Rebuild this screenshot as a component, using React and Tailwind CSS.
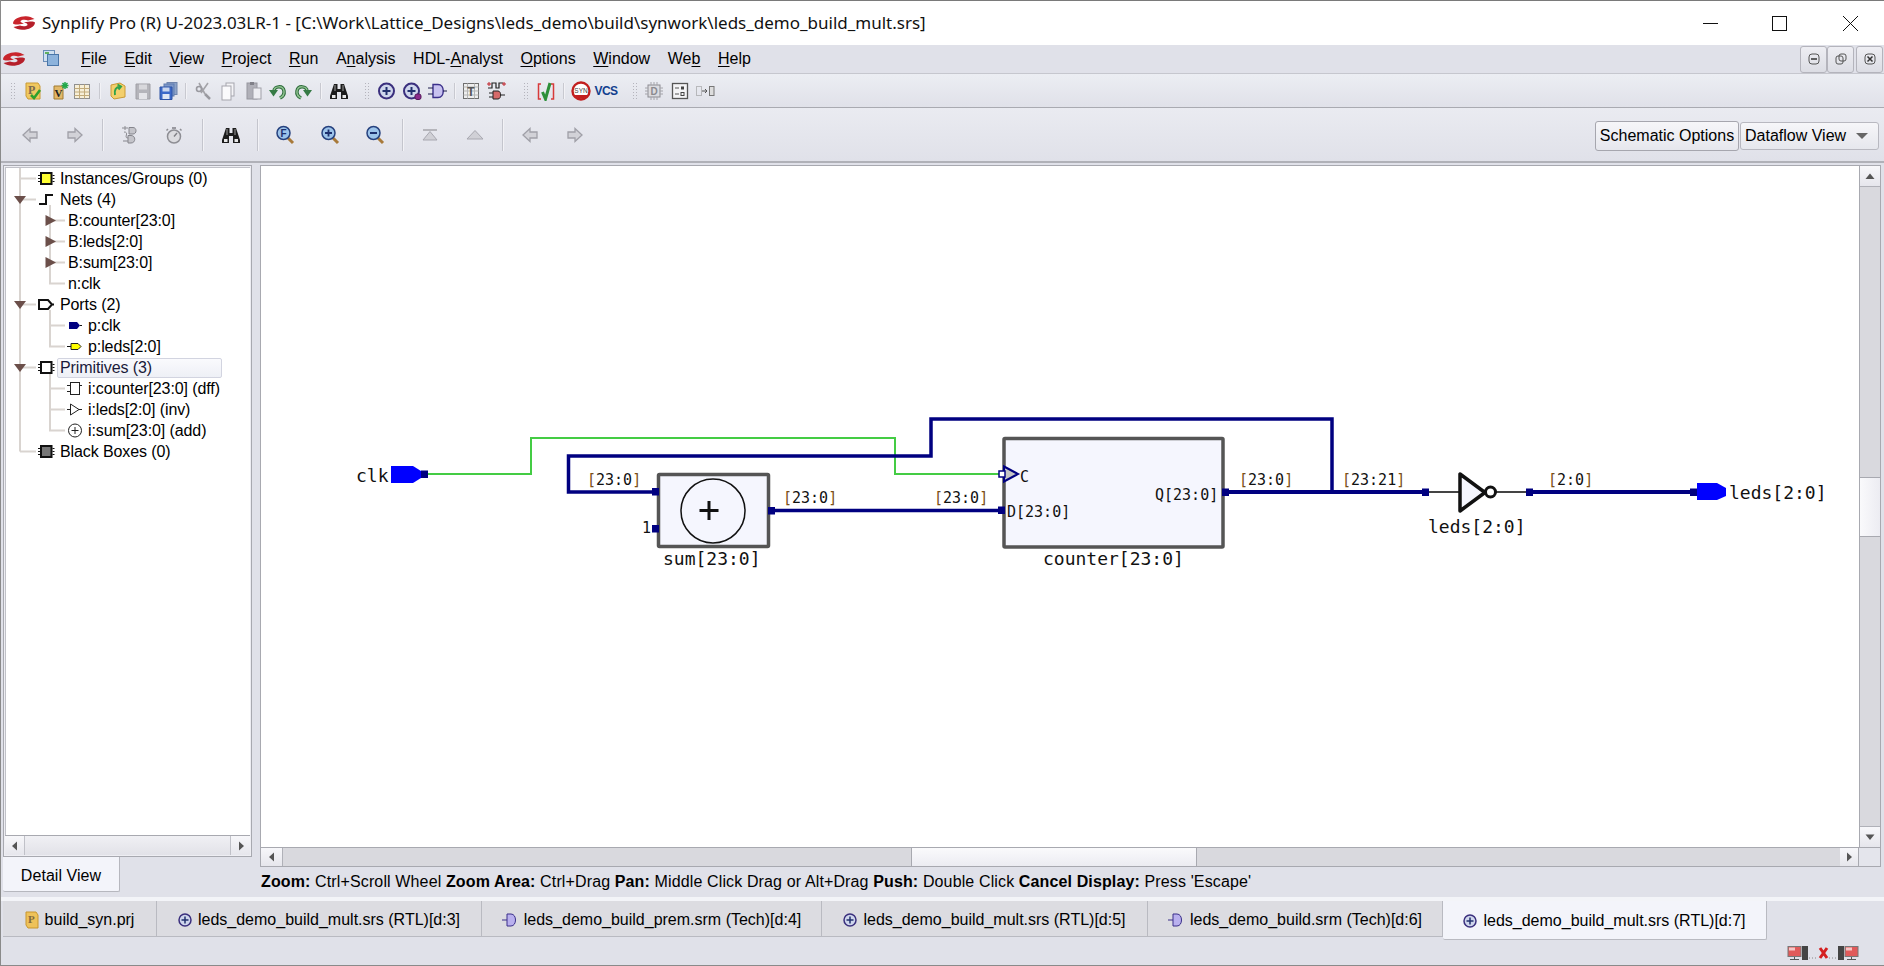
import React from "react";

const Svg = ({ children, className = "w-5 h-5", vb = "0 0 20 20" }) => (
  <svg viewBox={vb} className={className + " shrink-0"}>{children}</svg>
);

const Logo = ({ className }) => (
  <svg viewBox="0 0 24 16" className={className + " shrink-0"}>
    <path d="M1 8.500C1 4 8 1 14 1.200C17 1.300 20 2.300 22.500 4L16 5.500C13 4.200 8.500 4.800 8.500 6.300C8.500 7.400 10 8 12 8.500C6 9.600 3 10 1 8.500Z" fill="#c9252c" />
    <path d="M23 7.500C23 12 16 15 10 14.800C7 14.700 4 13.700 1.500 12L8 10.500C11 11.800 15.500 11.200 15.500 9.700C15.500 8.600 14 8 12 7.500C18 6.400 21 6 23 7.500Z" fill="#b51f2a" />
  </svg>
);

const Grip = () => (
  <svg viewBox="0 0 4 18" className="w-[4px] h-[18px] shrink-0">
    {[1, 4, 7, 10, 13, 16].map((y) => (
      <g key={y}><rect x="0" y={y} width="1" height="1" fill="#b4b4bc" /><rect x="3" y={y} width="1" height="1" fill="#b4b4bc" /></g>
    ))}
  </svg>
);
const Sep = ({ tall }) => (
  <div className={tall ? "w-[2px] h-[32px] bg-[#c4c5cd] border-r border-[#f2f2f6] shrink-0" : "w-[2px] h-[16px] bg-[#c8c9d0] border-r border-[#f2f2f6] shrink-0"} />
);

const IProj = () => (
  <Svg>
    <path d="M3 2H15L17 5V18H5L3 15Z" fill="#f0c860" stroke="#c99a35" />
    <text x="5" y="13" fontSize="12" fontWeight="700" fontFamily="Liberation Serif" fill="#7a6a50">P</text>
    <path d="M8 14L11 17L17 9" fill="none" stroke="#2ea02e" strokeWidth="2.500" />
  </Svg>
);
const IVer = () => (
  <Svg>
    <path d="M4 5H13V18H4Z" fill="#e2b868" stroke="#a07a30" />
    <text x="4.500" y="16" fontSize="11" fontWeight="700" fontFamily="Liberation Serif" fill="#222">V</text>
    <path d="M15 1V8M11.500 4.500H18.500M12.500 2L17.500 7M17.500 2L12.500 7" stroke="#22a84a" strokeWidth="1.500" />
  </Svg>
);
const ITable = () => (
  <Svg>
    <rect x="2.500" y="3.500" width="15" height="14" fill="#f7efd8" stroke="#8f8f8f" />
    <path d="M2.500 7.500H17.500M2.500 11H17.500M2.500 14.500H17.500M7.500 3.500V17.500M12.500 3.500V17.500" stroke="#c2ab7a" />
  </Svg>
);
const IFolder = () => (
  <Svg>
    <path d="M3 4L12 2L17 5V16L6 18L3 15Z" fill="#f3cf6c" stroke="#c99a35" />
    <path d="M7 14C6 9 8 6 12 5.500M9.500 3.500L13 5.500L10.500 8.500" fill="none" stroke="#2fa34a" strokeWidth="2" />
  </Svg>
);
const ISave = () => (
  <Svg>
    <path d="M3 3H17V18H3Z" fill="#b4b4ba" stroke="#a0a0a6" />
    <rect x="6" y="3.500" width="8" height="5" fill="#d8d8dc" />
    <rect x="6" y="12" width="8" height="6" fill="#e4e4e8" />
  </Svg>
);
const ISaveAll = () => (
  <Svg>
    <rect x="9" y="1.500" width="10" height="12" fill="#8da3c8" stroke="#6f84ac" />
    <rect x="6" y="3" width="10" height="12" fill="#7d97c8" stroke="#5f7cb0" />
    <path d="M2 6H14V18.500H2Z" fill="#3b68c8" stroke="#2c52a4" />
    <rect x="4.500" y="6.500" width="7" height="4" fill="#c9d6ee" />
    <rect x="4.500" y="13" width="7" height="5" fill="#dfe6f4" />
  </Svg>
);
const IScissors = () => (
  <Svg>
    <path d="M6 2L12 13M15 2L8 12" stroke="#a3a3a8" strokeWidth="1.600" />
    <circle cx="6" cy="8" r="2.500" fill="none" stroke="#9a9aa0" strokeWidth="1.600" />
    <path d="M12 13L17 18" stroke="#9a9aa0" strokeWidth="2.500" />
  </Svg>
);
const ICopy = () => (
  <Svg>
    <rect x="8" y="2" width="8" height="13" fill="#f4f4f7" stroke="#a5a5ad" />
    <rect x="4" y="5" width="9" height="14" fill="#fafafc" stroke="#a5a5ad" />
  </Svg>
);
const IPaste = () => (
  <Svg>
    <rect x="3" y="2" width="10" height="16" fill="#b0b0b8" stroke="#96969e" />
    <rect x="9" y="7" width="8" height="11" fill="#eeeef2" stroke="#a0a0a8" />
    <rect x="6" y="1" width="4" height="3" fill="#808088" />
  </Svg>
);
const IUndo = ({ flip }) => (
  <Svg>
    <g transform={flip ? "translate(20,0) scale(-1,1)" : undefined}>
      <path d="M6 10C6 5 15 4 16 10C16.500 13 15 15.500 12 17" fill="none" stroke="#2c6a3a" strokeWidth="3.500" />
      <path d="M6 10C6 5 15 4 16 10C16.500 13 15 15.500 12 17" fill="none" stroke="#8dc08e" strokeWidth="1.500" />
      <path d="M1 9H10L5.500 15.500Z" fill="#357a45" />
    </g>
  </Svg>
);
const IBino = () => (
  <Svg>
    <path d="M5 3H8.500V8H11.500V3H15L19 15V18H12V11H8V18H1V15Z" fill="#1c1c1c" />
    <rect x="3" y="14" width="3.500" height="3" fill="#e8e8e8" />
    <rect x="13.500" y="14" width="3.500" height="3" fill="#e8e8e8" />
    <path d="M6 4V10M14 4V10" stroke="#9a9a9a" />
  </Svg>
);
const IPlus = ({ dot }) => (
  <Svg>
    <circle cx="9.500" cy="10" r="7.500" fill="#cfd6ec" stroke="#3a2f7d" strokeWidth="2" />
    <path d="M9.500 6V14M5.500 10H13.500" stroke="#22306e" strokeWidth="2" />
    {dot && <rect x="13" y="13" width="6" height="5.500" rx="2" fill="#8a2a8a" stroke="#55185a" />}
  </Svg>
);
const IAnd = () => (
  <Svg>
    <path d="M6 3.500H11C18 3.500 18 16.500 11 16.500H6Z" fill="#c8c2f0" stroke="#3a2f8a" strokeWidth="1.400" />
    <path d="M1 7H6M1 13H6M16 10H20" stroke="#1c1c4c" />
  </Svg>
);
const ITGrid = () => (
  <Svg>
    <rect x="2.500" y="2.500" width="15" height="15" fill="#eeeeee" stroke="#6f6f6f" />
    <path d="M2.500 6H17.500M2.500 10H17.500M2.500 14H17.500M6.500 2.500V17.500M13.500 2.500V17.500" stroke="#b5b5b5" />
    <text x="10" y="15" textAnchor="middle" fontSize="12" fontWeight="700" fontFamily="Liberation Sans" fill="#555">T</text>
  </Svg>
);
const ISch = () => (
  <Svg>
    <path d="M1 7H5V2H9V7H12V2H16" fill="none" stroke="#222" strokeWidth="1.200" />
    <path d="M0 3H4M2 1V5M15 3H19M17 1V5" stroke="#c0222a" />
    <path d="M6 10H11C14.500 10 14.500 18 11 18H6Z" fill="#d66a6a" stroke="#222" />
    <path d="M2 12H6M2 16H6M14 14H18" stroke="#222" />
  </Svg>
);
const ICheck = () => (
  <Svg>
    <path d="M5 3H2.500V18H5M15 3H17.500V18H15" fill="none" stroke="#d73a3a" strokeWidth="1.500" />
    <path d="M6.500 11L9.500 18L14 2" fill="none" stroke="#2c8f38" strokeWidth="3" />
  </Svg>
);
const ISyn = () => (
  <Svg>
    <circle cx="10" cy="10" r="8.500" fill="#fff" stroke="#c21f1f" strokeWidth="2.400" />
    <path d="M3 14A8.500 8.500 0 0 0 17 14Z" fill="#c21f1f" />
    <text x="10" y="12" textAnchor="middle" fontSize="6.500" fontFamily="Liberation Sans" fill="#444">SYN</text>
  </Svg>
);
const IChip = () => (
  <Svg>
    <rect x="4" y="4" width="12" height="12" fill="#dcdce0" stroke="#8c8c92" />
    <path d="M7 1V4M10 1V4M13 1V4M7 16V19M10 16V19M13 16V19M1 7H4M1 10H4M1 13H4M16 7H19M16 10H19M16 13H19" stroke="#a4a4aa" />
    <text x="10" y="13.500" textAnchor="middle" fontSize="10" fontWeight="700" fontFamily="Liberation Sans" fill="#8a8a8f">D</text>
  </Svg>
);
const IBox = () => (
  <Svg>
    <rect x="2.500" y="2.500" width="15" height="15" fill="#f4f4f6" stroke="#555" strokeWidth="1.300" />
    <path d="M5 7H9M5 13H9" stroke="#555" />
    <rect x="11" y="5.500" width="3" height="3" fill="#444" />
    <rect x="11" y="11.500" width="3" height="3" fill="none" stroke="#444" />
  </Svg>
);
const IDash = () => (
  <Svg>
    <rect x="1.500" y="5.500" width="5" height="9" fill="none" stroke="#888" strokeDasharray="1 1" />
    <path d="M7 10H12M10 8L12 10L10 12" fill="none" stroke="#555" />
    <rect x="14.500" y="5.500" width="4.500" height="9" fill="#ddd" stroke="#777" />
  </Svg>
);
const IArrow = ({ right }) => (
  <Svg>
    <g transform={right ? "translate(20,0) scale(-1,1)" : undefined}>
      <path d="M3 10L10 3.500V7H17V13H10V16.500Z" fill="#d2d2d8" stroke="#a0a0a8" strokeWidth="1.300" />
    </g>
  </Svg>
);
const IPlug = () => (
  <Svg>
    <path d="M2 3H8M5 1V5" stroke="#8c8c92" />
    <path d="M9 2.500H13C17 2.500 17 9 13 9H9Z" fill="#c4c4ca" stroke="#85858c" />
    <path d="M4 7C10 7 3 13 8 13" fill="none" stroke="#8c8c92" />
    <path d="M8 10.500H11C16 10.500 16 18 11 18H8Z" fill="#c4c4ca" stroke="#85858c" />
    <path d="M3 16H8" stroke="#85858c" />
  </Svg>
);
const IWatch = () => (
  <Svg>
    <circle cx="10" cy="11.500" r="6.500" fill="#dcdce0" stroke="#8e8e94" strokeWidth="1.500" />
    <path d="M10 11.500L13 8M8 3H12" stroke="#808086" strokeWidth="1.400" />
    <path d="M4 4L2.500 5.500M16 4L17.500 5.500" stroke="#8e8e94" strokeWidth="1.500" />
  </Svg>
);
const IMag = ({ kind }) => (
  <Svg>
    <path d="M12 12L18 18" stroke="#a87a3a" strokeWidth="3" />
    <circle cx="8.500" cy="8" r="6.500" fill="#9cc3ea" stroke="#26417e" strokeWidth="1.500" />
    {kind === "F" && <text x="8.500" y="11.500" textAnchor="middle" fontSize="10" fontWeight="700" fontFamily="Liberation Sans" fill="#1c2f6e">F</text>}
    {kind === "+" && <path d="M8.500 4.500V11.500M5 8H12" stroke="#1c2f6e" strokeWidth="1.800" />}
    {kind === "-" && <path d="M5 8H12" stroke="#1c2f6e" strokeWidth="2" />}
  </Svg>
);
const ITop = () => (
  <Svg>
    <rect x="3" y="4" width="14" height="2" fill="#b5b5bb" />
    <path d="M10 6.500L17 15H3Z" fill="#d0d0d6" stroke="#a8a8b0" />
  </Svg>
);
const IUp = () => (
  <Svg>
    <path d="M10 5.500L18 14H2Z" fill="#d0d0d6" stroke="#a8a8b0" />
  </Svg>
);

const toolbar1 = [
  ["ml-[10px]", <Grip />], ["ml-[8px]", <IProj />], ["ml-[7px]", <IVer />], ["ml-[2px]", <ITable />], ["ml-[7px]", <Sep />],
  ["ml-[7px]", <IFolder />], ["ml-[5px]", <ISave />], ["ml-[5px]", <ISaveAll />], ["ml-[7px]", <Sep />],
  ["ml-[6px]", <IScissors />], ["ml-[5px]", <ICopy />], ["ml-[6px]", <IPaste />], ["ml-[4px]", <IUndo />], ["ml-[5px]", <IUndo flip />],
  ["ml-[7px]", <Sep />], ["ml-[7px]", <IBino />], ["ml-[16px]", <Grip />], ["ml-[8px]", <IPlus />], ["ml-[5px]", <IPlus dot />],
  ["ml-[5px]", <IAnd />], ["ml-[7px]", <Sep />], ["ml-[5px]", <ITGrid />], ["ml-[6px]", <ISch />], ["ml-[17px]", <Grip />],
  ["ml-[8px]", <ICheck />], ["ml-[7px]", <Sep />], ["ml-[6px]", <ISyn />],
  ["ml-[5px] w-5 justify-center font-['Liberation_Sans'] font-bold text-[12px] leading-none text-[#123f8f] tracking-[-0.6px]", "VCS"],
  ["ml-[17px]", <Grip />], ["ml-[7px]", <IChip />], ["ml-[6px]", <IBox />], ["ml-[5px]", <IDash />],
];
const toolbar2 = [
  ["ml-[19px]", <IArrow />], ["ml-[25px]", <IArrow right />], ["ml-[17px]", <Sep tall />], ["ml-[16px]", <IPlug />], ["ml-[24px]", <IWatch />],
  ["ml-[18px]", <Sep tall />], ["ml-[17px]", <IBino />], ["ml-[16px]", <Sep tall />], ["ml-[16px]", <IMag kind="F" />], ["ml-[25px]", <IMag kind="+" />],
  ["ml-[25px]", <IMag kind="-" />], ["ml-[17px]", <Sep tall />], ["ml-[16px]", <ITop />], ["ml-[25px]", <IUp />], ["ml-[17px]", <Sep tall />],
  ["ml-[16px]", <IArrow />], ["ml-[25px]", <IArrow right />],
];

const U = ({ children }) => <span className="underline underline-offset-2">{children}</span>;

const menu = [
  ["File", <><U>F</U>ile</>], ["Edit", <><U>E</U>dit</>], ["View", <><U>V</U>iew</>], ["Project", <><U>P</U>roject</>],
  ["Run", <><U>R</U>un</>], ["Analysis", <>A<U>n</U>alysis</>], ["HDL", <>HDL-<U>A</U>nalyst</>], ["Options", <><U>O</U>ptions</>],
  ["Window", <><U>W</U>indow</>], ["Web", <>We<U>b</U></>], ["Help", <><U>H</U>elp</>],
];

const TChip = ({ fill }) => (
  <g>
    <rect x="35" y="5" width="10.500" height="11" fill={fill} stroke="#111" strokeWidth="2" />
    <path d="M32 7.500H34M32 10.500H34M32 13.500H34M46.500 7.500H48.500M46.500 10.500H48.500M46.500 13.500H48.500" stroke="#111" />
  </g>
);
const down = <path d="M8 7H20L14 15Z" fill="#6b4f4a" />;

const rows = [
  { t: "Instances/Groups (0)", l: 1, icon: <TChip fill="#ffff33" /> },
  { t: "Nets (4)", l: 1, exp: true, icon: <path d="M33 15H40V6H47" fill="none" stroke="#111" strokeWidth="2" /> },
  { t: "B:counter[23:0]", l: 2, tri: true },
  { t: "B:leds[2:0]", l: 2, tri: true },
  { t: "B:sum[23:0]", l: 2, tri: true },
  { t: "n:clk", l: 2, last: true },
  { t: "Ports (2)", l: 1, exp: true, icon: <path d="M33 6H42L46 10.500L42 15H33Z M46 10.500H48" fill="#fff" stroke="#111" strokeWidth="2" /> },
  { t: "p:clk", l: 3, icon: <><path d="M63 7H71L74 10.500L71 14H63Z" fill="#000080" /><path d="M74 10.500H76" stroke="#111" /></> },
  { t: "p:leds[2:0]", l: 3, last: true, icon: <><path d="M65 7.500H72L75 10.500L72 13.500H65Z" fill="#ffff00" stroke="#222" /><path d="M61 10.500H65" stroke="#111" /></> },
  { t: "Primitives (3)", l: 1, exp: true, hi: true, icon: <TChip fill="#fff" /> },
  { t: "i:counter[23:0] (dff)", l: 3, icon: <><rect x="64.500" y="4.500" width="9" height="12" fill="#fff" stroke="#222" /><path d="M61 7.500H64M61 13.500H64M74 7.500H76" stroke="#222" /></> },
  { t: "i:leds[2:0] (inv)", l: 3, icon: <path d="M64.500 5V16L73 10.500ZM61 10.500H64M73 10.500H76" fill="#fff" stroke="#222" /> },
  { t: "i:sum[23:0] (add)", l: 3, last: true, icon: <><circle cx="69" cy="10.500" r="6.500" fill="#fff" stroke="#222" /><path d="M69 7V14M65.500 10.500H72.500" stroke="#222" /></> },
  { t: "Black Boxes (0)", l: 1, end: true, icon: <TChip fill="#777" /> },
];

const TreeRow = ({ r }) => {
  const w = r.l === 1 ? "w-[54px]" : r.l === 2 ? "w-[62px]" : "w-[82px]";
  const vb = r.l === 1 ? "0 0 54 21" : r.l === 2 ? "0 0 62 21" : "0 0 82 21";
  const g = "#d9d4d0";
  return (
    <div className="h-[21px] flex items-center tracking-[-0.1px]">
      <svg viewBox={vb} className={w + " h-[21px] shrink-0"}>
        <path d={r.end ? "M14 0V10.500" : "M14 0V21"} stroke={g} strokeWidth="2" />
        {r.l === 1 && <path d="M14 10.500H30" stroke={g} strokeWidth="2" />}
        {r.l === 1 && r.exp && <path d="M44 16V21" stroke={g} strokeWidth="2" />}
        {r.l > 1 && <path d={r.last ? "M44 0V10.500H59" : "M44 0V21M44 10.500H59"} fill="none" stroke={g} strokeWidth="2" />}
        {r.exp && down}
        {r.tri && <path d="M39.500 5L50 10.500L39.500 16Z" fill="#6b4f4a" />}
        {r.icon}
      </svg>
      <span className={r.hi ? "ml-[-3px] pl-[2px] w-[165px] h-[20px] leading-[17px] border border-[#d2d4e0] rounded-[2px] bg-linear-to-b from-[#fafafd] to-[#eef0f6] text-[#1a1a3a]" : "whitespace-nowrap"}>{r.t}</span>
    </div>
  );
};

const SBtn = ({ d, className }) => (
  <div className={"flex items-center justify-center shrink-0 bg-linear-to-b from-[#f7f7fa] to-[#e6e6ec] " + className}>
    <svg viewBox="0 0 12 12" className="w-3 h-3"><path d={d} fill="#555" /></svg>
  </div>
);

const mono = "DejaVu Sans Mono";
const Lab = ({ x, y, children }) => (
  <text x={x} y={y} fontFamily={mono} fontSize="15" fill="#111"><tspan fill="#7a4f18">[</tspan>{children}<tspan fill="#7a4f18">]</tspan></text>
);
const Big = ({ x, y, children }) => (
  <text x={x} y={y} fontFamily={mono} fontSize="18" fill="#111">{children}</text>
);
const Small = ({ x, y, children }) => (
  <text x={x} y={y} fontFamily={mono} fontSize="15" fill="#111">{children}</text>
);
const Pin = ({ x, y }) => <rect x={x} y={y} width="7" height="7.500" fill="#000080" />;

const Schematic = () => (
  <svg viewBox="261 166 1598 681" className="w-[1598px] h-[681px] shrink-0 bg-white">
    <path d="M428 474H531V438H895V474H1000" fill="none" stroke="#44cc44" strokeWidth="2" />
    <path d="M654 492H568.500V456H931V419H1332V492" fill="none" stroke="#000080" strokeWidth="3.500" />
    <path d="M775 510.500H1002" fill="none" stroke="#000080" strokeWidth="3.500" />
    <path d="M1228 492H1424" fill="none" stroke="#000080" strokeWidth="4" />
    <path d="M1530 492H1696" fill="none" stroke="#000080" strokeWidth="4" />
    <path d="M1428 492H1460M1495 492H1526" fill="none" stroke="#444" strokeWidth="2" />

    <rect x="658.500" y="474.500" width="110" height="72" fill="#f5f6fe" stroke="#555" strokeWidth="3.500" rx="1" />
    <circle cx="713" cy="511" r="32" fill="none" stroke="#111" strokeWidth="1.500" />
    <path d="M709 501V520M699.500 510.500H718.500" stroke="#111" strokeWidth="3" />
    <rect x="1004" y="438.500" width="219" height="108.500" fill="#f5f6fe" stroke="#555" strokeWidth="3.500" rx="1" />
    <path d="M1004 466.500L1018 474L1004 481.500Z" fill="#c4c4c4" stroke="#000080" strokeWidth="2" />
    <rect x="999" y="471" width="6" height="6" fill="#fff" stroke="#000080" strokeWidth="1.500" />

    <path d="M391 466H413L421 471V478L413 483H391Z" fill="#0000ff" />
    <path d="M1697 483H1717L1726 488V496L1717 500H1697Z" fill="#0000ff" />
    <path d="M1460 474V511L1485 492.500Z" fill="#f5f6fe" stroke="#111" strokeWidth="3.500" strokeLinejoin="round" />
    <circle cx="1490.500" cy="492" r="5" fill="#fff" stroke="#111" strokeWidth="3" />

    <Pin x="421" y="470.500" />
    <Pin x="652" y="488" />
    <Pin x="652" y="525" />
    <Pin x="768" y="507" />
    <Pin x="998" y="506.500" />
    <Pin x="1222" y="488.500" />
    <Pin x="1422" y="488.500" />
    <Pin x="1526" y="488.500" />
    <Pin x="1690" y="488.500" />

    <Big x="356" y="482">clk</Big>
    <Big x="1729" y="499">leds[2:0]</Big>
    <Big x="663" y="565">sum[23:0]</Big>
    <Big x="1043" y="565">counter[23:0]</Big>
    <Big x="1428" y="533">leds[2:0]</Big>

    <Lab x="587" y="485">23:0</Lab>
    <Lab x="783" y="503">23:0</Lab>
    <Lab x="934" y="503">23:0</Lab>
    <Lab x="1239" y="485">23:0</Lab>
    <Lab x="1342" y="485">23:21</Lab>
    <Lab x="1548" y="485">2:0</Lab>
    <Small x="1020" y="482">C</Small>
    <Small x="1007" y="517">D[23:0]</Small>
    <Small x="1155" y="500">Q[23:0]</Small>
    <Small x="642" y="533">1</Small>
  </svg>
);

const Dot = () => (
  <svg viewBox="0 0 14 14" className="w-[14px] h-[14px] shrink-0">
    <circle cx="7" cy="7" r="6" fill="#cfd6ec" stroke="#3a2f7d" strokeWidth="1.500" />
    <path d="M7 3.500V10.500M3.500 7H10.500" stroke="#22306e" strokeWidth="1.500" />
  </svg>
);
const Gate = () => (
  <svg viewBox="0 0 16 14" className="w-[16px] h-[14px] shrink-0">
    <path d="M5 1H9C15 1 15 13 9 13H5Z" fill="#b9b0ee" stroke="#3a2f8a" />
    <path d="M0 7H5" stroke="#3a2f8a" />
  </svg>
);
const PFile = () => (
  <svg viewBox="0 0 14 18" className="w-[14px] h-[18px] shrink-0">
    <path d="M1 1H11L13 4V17H3L1 14Z" fill="#eec25a" stroke="#c8962e" />
    <text x="3" y="12" fontSize="11" fontWeight="700" fontFamily="Liberation Serif" fill="#806a40">P</text>
  </svg>
);

const tabs = [
  { w: "w-[154px]", icon: <PFile />, t: "build_syn.prj" },
  { w: "w-[325px]", icon: <Dot />, t: "leds_demo_build_mult.srs (RTL)[d:3]" },
  { w: "w-[340px]", icon: <Gate />, t: "leds_demo_build_prem.srm (Tech)[d:4]" },
  { w: "w-[326px]", icon: <Dot />, t: "leds_demo_build_mult.srs (RTL)[d:5]" },
  { w: "w-[295px]", icon: <Gate />, t: "leds_demo_build.srm (Tech)[d:6]" },
];

const MdiBtn = ({ className = "", children }) => (
  <div className={"w-[27px] h-[27px] rounded-[3px] border border-[#b4b4bc] bg-linear-to-b from-[#eeeef3] to-[#dcdde4] flex items-center justify-center " + className}>
    <svg viewBox="0 0 12 12" className="w-[12px] h-[12px]">{children}</svg>
  </div>
);

const Monitor = () => (
  <svg viewBox="0 0 15 14" className="w-[15px] h-[14px] shrink-0">
    <rect x="1" y="0.500" width="13" height="10" fill="#e05a5a" stroke="#777" />
    <rect x="2" y="1.500" width="6" height="3" fill="#f6c6c6" />
    <path d="M7.500 11V13M3 13.500H12" stroke="#555" />
  </svg>
);

export default function App() {
  return (
    <div className="w-[1884px] h-[966px] flex flex-col overflow-hidden bg-[#e0e1e9] border-l border-b border-[#8a8a8a] font-['Liberation_Sans',sans-serif] text-[16px] text-black">
      {/* Title bar */}
      <div className="h-[45px] shrink-0 bg-white border-t border-[#7a7a7a] flex items-center text-[#111]">
        <Logo className="ml-[11px] w-[24px] h-[16px]" />
        <span className="ml-[6px] font-['Noto_Sans',sans-serif] text-[17px] whitespace-nowrap">{"Synplify Pro (R) U-2023.03LR-1 - [C:\\Work\\Lattice_Designs\\leds_demo\\build\\synwork\\leds_demo_build_mult.srs]"}</span>
        <svg viewBox="0 0 15 15" className="ml-auto w-[15px] h-[15px]"><path d="M0 7.500H15" stroke="#111" /></svg>
        <svg viewBox="0 0 15 15" className="ml-[54px] w-[15px] h-[15px]"><rect x="0.500" y="0.500" width="14" height="14" fill="none" stroke="#111" /></svg>
        <svg viewBox="0 0 15 15" className="ml-[56px] mr-[26px] w-[15px] h-[15px]"><path d="M0 0L15 15M15 0L0 15" stroke="#111" /></svg>
      </div>

      {/* Menu */}
      <div className="h-[29px] shrink-0 flex items-center border-b border-[#c6c7ce]">
        <Logo className="ml-[1px] w-[24px] h-[16px]" />
        <svg viewBox="0 0 16 16" className="ml-[17px] w-[16px] h-[16px] mb-[3px]">
          <rect x="0.500" y="0.500" width="11" height="11" fill="#cfe0f0" stroke="#6a8db8" />
          <rect x="4.500" y="4.500" width="11" height="11" fill="#8db3dc" stroke="#4a76a8" />
          <rect x="2" y="2" width="4" height="2" fill="#5fb05f" />
        </svg>
        <div className="ml-[22px] flex items-center gap-[17.6px] whitespace-nowrap">
          {menu.map(([k, n]) => <span key={k}>{n}</span>)}
        </div>
        <div className="ml-auto flex items-center pr-[1px]">
          <MdiBtn><rect x="1" y="1" width="10" height="10" rx="3" fill="none" stroke="#555" /><path d="M3 6H9" stroke="#333" strokeWidth="1.500" /></MdiBtn>
          <MdiBtn><rect x="1" y="3" width="7" height="8" rx="2" fill="none" stroke="#555" /><rect x="4" y="1" width="7" height="7" rx="2" fill="none" stroke="#555" /></MdiBtn>
          <MdiBtn className="ml-[2px]"><rect x="1" y="1" width="10" height="10" rx="3" fill="none" stroke="#555" /><path d="M3.500 3.500L8.500 8.500M8.500 3.500L3.500 8.500" stroke="#333" strokeWidth="1.500" /></MdiBtn>
        </div>
      </div>

      {/* Toolbar 1 */}
      <div className="h-[34px] shrink-0 flex items-center border-b border-[#a9aab1] bg-linear-to-b from-[#eceef3] to-[#e0e1e9]">
        {toolbar1.map(([c, el], i) => <div key={i} className={c + " shrink-0 flex items-center"}>{el}</div>)}
      </div>

      {/* Toolbar 2 */}
      <div className="h-[55px] shrink-0 flex items-center border-b-2 border-[#b0b1b8] bg-linear-to-b from-[#eaebf1] to-[#e0e1e9]">
        {toolbar2.map(([c, el], i) => <div key={i} className={c + " shrink-0 flex items-center"}>{el}</div>)}
        <div className="ml-auto flex items-center mr-[5px] mt-[3px]">
          <div className="w-[144px] h-[30px] flex items-center justify-center rounded-[3px] border border-[#a6a6ae] bg-linear-to-b from-[#f6f6f9] to-[#e6e7ed] whitespace-nowrap">Schematic Options</div>
          <div className="ml-[1px] w-[139px] h-[28px] flex items-center pl-[4px] rounded-[3px] border border-[#b8b8c0] bg-linear-to-b from-[#f6f6f9] to-[#e6e7ed] whitespace-nowrap">
            Dataflow View
            <svg viewBox="0 0 12 6" className="ml-[10px] w-[12px] h-[6px]"><path d="M0 0H12L6 6Z" fill="#666" /></svg>
          </div>
        </div>
      </div>

      {/* Main */}
      <div className="h-[734px] shrink-0 flex">
        <div className="ml-[2px] w-[249px] shrink-0 flex flex-col pt-[2px]">
          <div className="h-[692px] shrink-0 border border-[#a8a9b0] p-[1px] flex flex-col bg-[#eeeef3]">
            <div className="flex-1 min-h-0 bg-white border-t border-l border-[#c0c1c8] overflow-hidden">
              {rows.map((r) => <TreeRow key={r.t} r={r} />)}
            </div>
            <div className="h-[20px] shrink-0 flex border-t border-[#a8a9b0]">
              <SBtn d="M8 1.500V10.500L3 6Z" className="w-[20px] border-r border-[#c0c1c8]" />
              <div className="flex-1 bg-linear-to-b from-[#f0f0f4] to-[#e2e2e8]" />
              <SBtn d="M4 1.500V10.500L9 6Z" className="w-[20px] border-l border-[#c0c1c8]" />
            </div>
          </div>
          <div className="w-[117px] h-[35px] shrink-0 flex items-center justify-center pt-[3px] tracking-[0.05px] bg-[#f3f4fa] border-b border-r border-[#b6b7be] rounded-b-[2px]">Detail View</div>
        </div>

        <div className="ml-[8px] w-[1621px] shrink-0 flex flex-col pt-[2px]">
          <div className="h-[702px] shrink-0 border border-[#a8a9b0] flex flex-col">
            <div className="h-[681px] shrink-0 flex">
              <Schematic />
              <div className="w-[21px] shrink-0 flex flex-col border-l border-[#a8a9b0] bg-[#d9d9de]">
                <SBtn d="M1.500 9H10.500L6 3.500Z" className="h-[21px] border-b border-[#b0b1b8]" />
                <div className="h-[290px] shrink-0" />
                <div className="h-[60px] shrink-0 bg-linear-to-r from-[#fafafc] to-[#ececf2] border-y border-[#a8a9b0]" />
                <div className="flex-1" />
                <SBtn d="M1.500 3.500H10.500L6 9Z" className="h-[21px] border-t border-[#b0b1b8]" />
              </div>
            </div>
            <div className="flex-1 flex border-t border-[#a8a9b0] bg-[#d9d9de]">
              <SBtn d="M8 1.500V10.500L3 6Z" className="w-[22px] border-r border-[#b0b1b8]" />
              <div className="w-[628px] shrink-0" />
              <div className="w-[286px] shrink-0 bg-linear-to-b from-[#fafafc] to-[#ececf2] border-x border-[#a8a9b0]" />
              <div className="w-[643px] shrink-0" />
              <SBtn d="M4 1.500V10.500L9 6Z" className="w-[18px]" />
              <div className="w-[22px] shrink-0 bg-[#e4e5ec] border-l border-[#a8a9b0]" />
            </div>
          </div>
          <div className="h-[30px] shrink-0 flex items-center pl-[1px] whitespace-nowrap tracking-[0.13px]">
            <span><b>Zoom:</b> Ctrl+Scroll Wheel <b>Zoom Area:</b> Ctrl+Drag <b>Pan:</b> Middle Click Drag or Alt+Drag <b>Push:</b> Double Click <b>Cancel Display:</b> Press 'Escape'</span>
          </div>
        </div>
      </div>

      {/* Tabs */}
      <div className="h-[4px] shrink-0 bg-[#f3f4f8]" />
      <div className="h-[36px] shrink-0 flex pl-[2px]">
        {tabs.map((t) => (
          <div key={t.t} className={t.w + " shrink-0 flex items-center justify-center gap-[6px] pt-[2px] bg-[#dcdce1] border-r border-b border-[#b9bac1] whitespace-nowrap"}>
            {t.icon}<span>{t.t}</span>
          </div>
        ))}
        <div className="w-[324px] h-[39px] shrink-0 flex items-center justify-center gap-[6px] pt-[2px] bg-[#f3f4fa] border-r border-b border-[#b9bac1] rounded-b-[2px] whitespace-nowrap">
          <Dot /><span>leds_demo_build_mult.srs (RTL)[d:7]</span>
        </div>
      </div>

      {/* Bottom */}
      <div className="flex-1 flex items-start justify-end pt-[9px] pr-[25px]">
        <div className="flex items-center">
          <Monitor />
          <div className="w-[6px] h-[14px] bg-[#444]" />
          <svg viewBox="0 0 30 14" className="w-[30px] h-[14px]"><path d="M12 2L19 12M19 2L12 12" stroke="#d42020" strokeWidth="3" /><path d="M1 12H10M21 12H29" stroke="#888" strokeDasharray="1 2" /></svg>
          <div className="w-[6px] h-[14px] bg-[#444]" />
          <Monitor />
        </div>
      </div>
    </div>
  );
}
